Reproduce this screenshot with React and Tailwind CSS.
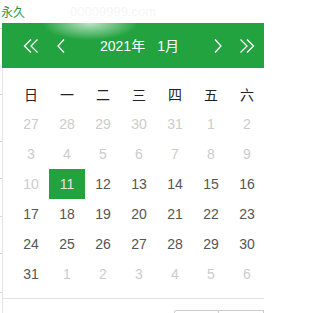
import React from 'react';

const WEEK = ['日', '一', '二', '三', '四', '五', '六'];

// 6 rows x 7 days, `o` = outside current month
const DAYS = [
  [27, 28, 29, 30, 31, 1, 2].map((d) => ({ d, o: true })),
  [3, 4, 5, 6, 7, 8, 9].map((d) => ({ d, o: true })),
  [{ d: 10, o: true }, ...[11, 12, 13, 14, 15, 16].map((d) => ({ d }))],
  [17, 18, 19, 20, 21, 22, 23].map((d) => ({ d })),
  [24, 25, 26, 27, 28, 29, 30].map((d) => ({ d })),
  [{ d: 31 }, ...[1, 2, 3, 4, 5, 6].map((d) => ({ d, o: true }))],
];

const TICKS = ['mt-[5px]', 'mt-[65px]', 'mt-[46px]', 'mt-[36px]', 'mt-[37px]', 'mt-[36px]', 'mt-[38px]'];

function Chevron({ dir = 'left', double = false }) {
  const w = double ? 16 : 8;
  const pts = dir === 'left'
    ? double ? ['8,0.5 1.5,7 8,13.5', '14.5,0.5 8,7 14.5,13.5'] : ['7,0.5 1,7 7,13.5']
    : double ? ['1.5,0.5 8,7 1.5,13.5', '8,0.5 14.5,7 8,13.5'] : ['1,0.5 7,7 1,13.5'];
  return (
    <svg width={w} height="14" viewBox={`0 0 ${w} 14`} className="shrink-0">
      {pts.map((p) => (
        <polyline key={p} points={p} fill="none" stroke="white" strokeWidth="1.3" />
      ))}
    </svg>
  );
}

export default function App() {
  return (
    <div className="w-[264px] h-[313px] overflow-hidden bg-white font-['Liberation_Sans','Noto_Sans_CJK_SC',sans-serif]">
      <div className="h-[23px] flex items-center pl-[1px] gap-[45px]">
        <span className="text-[12px] leading-none text-[#2a9a3c] font-['Noto_Sans_CJK_SC',sans-serif]">永久</span>
        <span className="text-[13px] leading-none text-[#f6f6f6]">00009999.com</span>
      </div>
      <div className="flex">
        <div className="w-[2px] flex flex-col">
          {TICKS.map((m, i) => (
            <div key={i} className={`${m} h-px w-[2px] bg-[#dcd6d9]`} />
          ))}
        </div>
        <div className="flex-1 flex flex-col">
          <div className="h-[45px] bg-[#23a33f] bg-[radial-gradient(ellipse_48px_17px_at_88px_0px,rgba(255,255,255,0.7),rgba(255,255,255,0))] flex items-center pl-[21px] pr-[10px] text-white">
            <Chevron double />
            <div className="ml-[18px]">
              <Chevron />
            </div>
            <div className="flex-1 flex justify-center gap-[12px] text-[14px] leading-none font-['Liberation_Sans','Noto_Sans_CJK_SC',sans-serif]">
              <span>2021年</span>
              <span>1月</span>
            </div>
            <Chevron dir="right" />
            <div className="ml-[17px]">
              <Chevron dir="right" double />
            </div>
          </div>
          <div className="border-l border-[#ebe3e7] pt-[11px]">
            <div className="pl-[10px]">
              <div className="grid grid-cols-[repeat(7,36px)] h-[30px] items-center text-center text-[14px] text-[#222] font-['Noto_Sans_CJK_SC',sans-serif]">
                {WEEK.map((w) => (
                  <span key={w}>{w}</span>
                ))}
              </div>
              {DAYS.map((row, r) => (
                <div key={r} className="grid grid-cols-[repeat(7,36px)] h-[30px] text-[14px]">
                  {row.map((c, i) => {
                    const sel = c.d === 11 && !c.o;
                    return (
                      <div
                        key={i}
                        className={`flex items-center justify-center ${
                          sel ? 'bg-[#23a33f] text-[#e6e6e6]' : c.o ? 'text-[#cccccc]' : 'text-[#555555]'
                        }`}
                      >
                        {c.d}
                      </div>
                    );
                  })}
                </div>
              ))}
            </div>
            <div className="mt-[9px] border-t border-[#e3e3e3] pt-[11px] flex pl-[171px]">
              <div className="w-[45px] h-[24px] border border-[#cccccc] rounded-tl-[2px]" />
              <div className="w-[45px] h-[24px] border border-l-0 border-[#cccccc]" />
            </div>
          </div>
        </div>
      </div>
    </div>
  );
}
